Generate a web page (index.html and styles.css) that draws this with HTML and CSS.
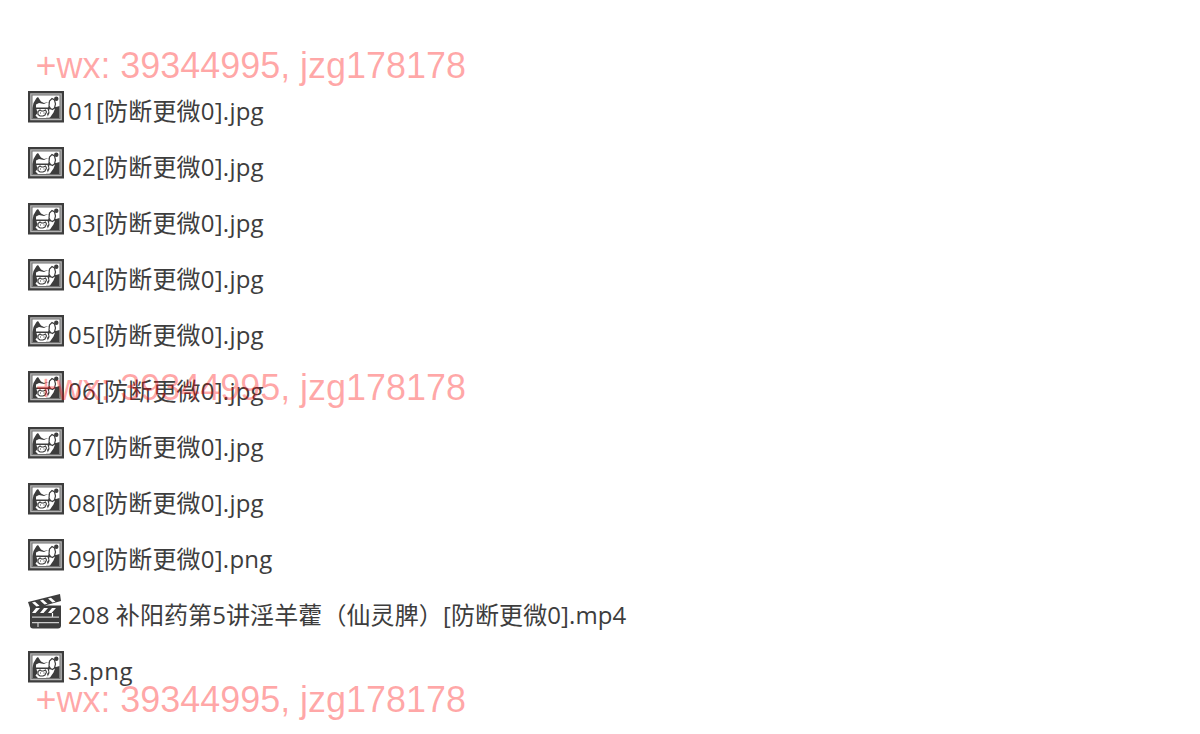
FILE: index.html
```
<!DOCTYPE html>
<html lang="zh-CN">
<head>
  <meta charset="UTF-8">
  <title>文件列表</title>
  <meta name="viewport" content="width=device-width, initial-scale=1.0">
  <link rel="stylesheet" href="styles.css">
</head>
<body>
  <svg class="symbols" aria-hidden="true">
    <symbol id="picture" viewBox="0 0 36 32">
      <path fill="#3d3d3d" d="M0 0h36v31.5H0z"/>
      <path fill="#707070" stroke="#b5b5b5" stroke-width="1.3" d="M2.800 2.800h30.400v25.900H2.800z"/>
      <path fill="#fff" d="M4.500 4.500h27v22.500h-27z"/>
      <!-- hills -->
      <path fill="#3d3d3d" d="M4.500 17l1-5 3-5 1.500-1 3 4.500 3 1.500 4-1 3 4 5 1 3.500-1v12h-27z"/>
      <path fill="#fff" d="M8 13.500l3-1.500 5 1 4-2 2 3-2 2.500H8z"/>
      <!-- rocks and path -->
      <path fill="#fff" d="M8.500 18h11l1 3-1.500 2 1 3-2 1h-8l-2.500-2.500 2-2.500z"/>
      <path fill="none" stroke="#3d3d3d" stroke-width="1.100" d="M10 20.500l2-1.500 1.500 1h2l2-1 1 2-1.500 3-2 1h-3l-2-1.500zM12 22h1M15.500 22h1"/>
      <path fill="#fff" d="M21 18.500l6-1-1.500 4-3.500 5-3 .5 2.500-5z"/>
      <!-- tree and sun -->
      <path fill="#fff" stroke="#3d3d3d" stroke-width="1.200" d="M21 15l.5-5 2.500-2.500 2.500 1.500 1 4-1 4-2 1.500-2-1z"/>
      <circle cx="28.300" cy="7.800" r="2.200" fill="#3d3d3d"/>
    </symbol>
    <symbol id="clapper" viewBox="0 0 36 36">
      <path fill="#3d3d3d" d="M0 8L32 0l1 7-16 4.500h16v20q0 3-3 3H5q-3 0-3-3V14z"/>
      <path fill="#fff" d="M4 8.500l3-.8 4.500 4-3 .8zM12 6.500l3-.8 4.500 4-3 .8zM20 4.500l3-.8 4.500 4-3 .8zM8 14h4l-4.500 5H4zM16 14h4l-4.500 5H12zM24 14h4l-4.500 5H20z"/>
      <path fill="none" stroke="#fff" stroke-width="1.200" d="M24.500 19v4"/>
      <path fill="none" stroke="#ccc" stroke-width="1.200" d="M4 23.200h27M4 28.600h27M10 29v4"/>
    </symbol>
  </svg>

  <ul class="file-list">
    <li class="file"><svg class="icon"><use href="#picture"/></svg><span>01[防断更微0].jpg</span></li>
    <li class="file"><svg class="icon"><use href="#picture"/></svg><span>02[防断更微0].jpg</span></li>
    <li class="file"><svg class="icon"><use href="#picture"/></svg><span>03[防断更微0].jpg</span></li>
    <li class="file"><svg class="icon"><use href="#picture"/></svg><span>04[防断更微0].jpg</span></li>
    <li class="file"><svg class="icon"><use href="#picture"/></svg><span>05[防断更微0].jpg</span></li>
    <li class="file"><svg class="icon"><use href="#picture"/></svg><span>06[防断更微0].jpg</span></li>
    <li class="file"><svg class="icon"><use href="#picture"/></svg><span>07[防断更微0].jpg</span></li>
    <li class="file"><svg class="icon"><use href="#picture"/></svg><span>08[防断更微0].jpg</span></li>
    <li class="file"><svg class="icon"><use href="#picture"/></svg><span>09[防断更微0].png</span></li>
    <li class="file long"><svg class="icon video"><use href="#clapper"/></svg><span>208 补阳药第5讲淫羊藿（仙灵脾）[防断更微0].mp4</span></li>
    <li class="file short"><svg class="icon"><use href="#picture"/></svg><span>3.png</span></li>
  </ul>

  <div class="watermark top">+wx: 39344995, jzg178178</div>
  <div class="watermark middle">+wx: 39344995, jzg178178</div>
  <div class="watermark bottom">+wx: 39344995, jzg178178</div>
</body>
</html>
```
FILE: styles.css
```
body {
  margin: 0;
  position: relative;
  height: 734px;
  overflow: hidden;
  background-color: #fff;
  color: #3d3d3d;
  font-family: "Open Sans", "Noto Sans CJK SC", sans-serif;
}

.symbols {
  display: none;
}

.file-list {
  margin: 0;
  padding: 84px 28px 0;
  list-style: none;
}

.file {
  display: flex;
  gap: 4px;
  height: 56px;
  font-size: 24px;
  line-height: 54px;
  letter-spacing: 0.22px;
  white-space: nowrap;
}

.file.long {
  letter-spacing: 0.1px;
}

.file.short {
  letter-spacing: 0.5px;
}

.icon {
  flex: none;
  width: 36px;
  height: 32px;
  margin-top: 7px;
}

.icon.video {
  height: 36px;
  margin-top: 6px;
}

.watermark {
  position: absolute;
  left: 35.5px;
  color: rgba(255, 0, 0, 0.35);
  font-family: "Liberation Sans", Arial, sans-serif;
  font-size: 36px;
  line-height: 40px;
  letter-spacing: -0.04px;
  white-space: nowrap;
}

.top {
  top: 46px;
}

.middle {
  top: 368px;
}

.bottom {
  top: 680px;
}
```
